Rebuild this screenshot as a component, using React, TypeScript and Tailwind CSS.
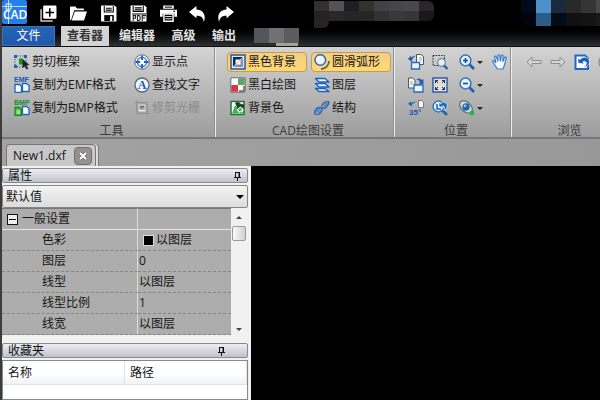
import { useState } from "react";
import type { ReactNode } from "react";

function Svg({ children, size = 16, label }: { children: ReactNode; size?: number; label?: string }) {
  return (
    <svg width={size} height={size} viewBox="0 0 16 16" fill="none" className="shrink-0" role={label ? "img" : undefined} aria-label={label} aria-hidden={label ? undefined : true}>
      {children}
    </svg>
  );
}

/* Title bar icons */
const quick: { name: string; art: ReactNode; width: string }[] = [
  {
    name: "新建",
    width: "w-[30px]",
    art: (
      <>
        <path d="M1 4v11h11" stroke="#ccc" strokeWidth="1.4" />
        <rect x="3" y="0.5" width="12.5" height="12.5" rx="1.2" fill="#fff" />
        <path d="M9.2 3v8M5.2 7h8" stroke="#000" strokeWidth="1.5" />
      </>
    ),
  },
  {
    name: "打开",
    width: "w-[30px]",
    art: (
      <>
        <path d="M0 14V2.5Q0 1.5 1 1.5h4l1.6 1.7H13V5H4L1 14z" fill="#fff" />
        <path d="M4.5 6H16l-2.8 8.7H1.5z" fill="#fff" />
      </>
    ),
  },
  {
    name: "保存",
    width: "w-[30px]",
    art: (
      <>
        <path d="M1 0.5h12.6L15.5 2v13.5H1z" fill="#fff" />
        <path d="M4 1v5.5h8.5V1M5.5 3h5.5M5.5 4.8h5.5" stroke="#000" />
        <path d="M4 9.5h9V15H4z" fill="#000" />
        <path d="M9.5 10.5h2V15h-2z" fill="#fff" />
      </>
    ),
  },
  {
    name: "保存为 PDF",
    width: "w-[30px]",
    art: (
      <>
        <path d="M0.5 0.5H14L15.5 2v13.5h-15z" fill="#fff" />
        <path d="M3 1v5h9.5V1M4.5 2.7H11M4.5 4.5H11M2 8.5h13" stroke="#000" />
        <path d="M3 15v-5h2.2v2.5H3M7 10v4.5h1.7l.8-1v-2.5l-.8-1zM11.5 15v-5H15M11.5 12.3h2.8" stroke="#222" />
      </>
    ),
  },
  {
    name: "打印",
    width: "w-[30px]",
    art: (
      <>
        <path d="M3 0.5h10v3H3zM0 4.5h16V11h-2.5V8h-11v3H0z" fill="#fff" />
        <path d="M4.5 2h7" stroke="#000" />
        <path d="M3.7 8.5h8.6v6.7H3.7z" stroke="#fff" strokeWidth="1.4" />
        <path d="M5 10.8h6M5 13h6" stroke="#ddd" />
        <path d="M12.5 6h1.5" stroke="#000" />
      </>
    ),
  },
  {
    name: "撤销",
    width: "w-[28px]",
    art: <path d="M0 6.5 7 1v3.2c6 .2 9.4 4.8 7 11.8-.6-4.2-2.7-6.1-7-5.9V12.5z" fill="#fff" />,
  },
  {
    name: "重做",
    width: "w-[28px]",
    art: <path d="M16 6.5 9 1v3.2C3 4.4-.4 9 2 16c.6-4.2 2.7-6.1 7-5.9V12.5z" fill="#fff" />,
  },
];

/* Ribbon icons */
const clipArt = (
  <>
    <rect x="1" y="2" width="11" height="11" stroke="#123b8c" strokeDasharray="1 1.5" />
    <path d="M0 1h3v3H0zM10 1h3v3h-3zM0 11h3v3H0z" fill="#1c62c4" />
    <path d="M5 4.5h4v6H5z" fill="#15951b" />
    <path d="m8.5 5 7 6-3 .4 1.8 3-1.7 1-1.8-3.2-2.3 2z" fill="#222" />
  </>
);
const dialArt = (
  <>
    <circle cx="8" cy="8" r="7.2" fill="#f4f8fd" stroke="#666e7b" />
    <circle cx="8" cy="8" r="4.6" stroke="#2b6cc8" strokeWidth="1.3" />
    <path d="M8 1.5V6M8 10v4.5M1.5 8H6M10 8h4.5" stroke="#1b5fbf" strokeWidth="1.8" />
  </>
);
const pages = (green: boolean) => (
  <>
    <path d="M8.5 6.5h4l2.5 2v6H8.5z" fill="#fff" stroke="#1c62c4" strokeWidth="1.3" />
    <path d="M1 7.5h4.5l2 2v6H1z" fill={green ? "#55bd4a" : "#fff"} stroke={green ? "#168b20" : "#1c62c4"} strokeWidth="1.3" />
    {green && <path d="M2.5 11h3.5M2.5 13h3.5" stroke="#e6f7e2" />}
  </>
);
const emfArt = (
  <>
    <text x="0" y="5" fontFamily="Liberation Sans, sans-serif" fontWeight="700" fontSize="7" fill="#1658b0">EMF</text>
    {pages(false)}
  </>
);
const bmpArt = (
  <>
    <text x="0" y="5" fontFamily="Liberation Sans, sans-serif" fontWeight="700" fontSize="7" fill="#18902a">BMP</text>
    {pages(true)}
  </>
);
const findArt = (
  <>
    <circle cx="8" cy="8" r="7" fill="#f0f6fd" stroke="#5b6370" strokeWidth="1.3" />
    <text x="8" y="12" textAnchor="middle" fontFamily="Liberation Serif, serif" fontWeight="700" fontSize="12" fill="#1759b5">A</text>
  </>
);
const rasterArt = (
  <>
    <path d="M2.5 0v13.5H16M0 2.5h13.5V16" stroke="#929292" />
    <path d="M4 4h8v8H4z" fill="#f0f0f0" stroke="#999" />
    <path d="M5.5 5.5h5v4h-5z" fill="#777" />
    <path d="m5.5 9.5 2-2 1 1 2-2v3z" fill="#aaa" />
  </>
);
const blackArt = (
  <>
    <rect x="1" y="1" width="14" height="14" fill="#dbe8f8" stroke="#24599d" strokeWidth="1.5" />
    <path d="M3 3h10L3 13z" fill="#16253e" />
    <path d="M13 3v10H3z" fill="#8792a3" />
    <path d="M5.5 5.5h5v5h-5z" fill="#fff" />
    <path d="M3 13 13 3" stroke="#bcc8d9" />
  </>
);
const bwArt = (
  <>
    <path d="M1 1h14v14H1z" fill="#fff" stroke="#555" />
    <path d="M1.5 1.5H8V8H1.5z" fill="#fff" />
    <path d="M8 1.5h6.5V8H8z" fill="#59a666" />
    <path d="M1.5 8H8v6.5H1.5z" fill="#dd3342" />
    <path d="M8 8h6.5v6.5H8z" fill="#f6f6f6" />
    <path d="M9 14h5V9" stroke="#222" />
  </>
);
const colorArt = (
  <>
    <rect x="1" y="1.5" width="13" height="13" fill="#fff" stroke="#217635" strokeWidth="1.5" />
    <path d="m2 13.5 3-8 9 8z" fill="#35b64a" />
    <path d="M5 3.5Q8 .5 11 4l3.5.5-1 4.5-3-2-3 2-1-3z" fill="#273c2c" />
    <path d="m6.5 10 4-3.5 3 3-4 3.5z" fill="#fff" />
    <path d="m8 9.8 2.5-2 1.8 1.8-2.5 2z" fill="#35b64a" />
  </>
);
const arcArt = (
  <>
    <path d="M15 7a8 8 0 0 1-8 8" stroke="#65635d" strokeWidth="1.8" />
    <circle cx="6.3" cy="6" r="5.3" fill="#edf4fc" stroke="#2d68b8" strokeWidth="1.5" />
    <path d="M3 6q0-3 3-3" stroke="#fff" strokeWidth="2" />
  </>
);
const layersArt = (
  <g fill="#eef5fd" stroke="#1b60bd" strokeWidth="1.4" strokeLinejoin="round">
    <path d="M1.5 11.5H11l4 3H5z" />
    <path d="M1.5 6.5H11l4 3.5H5z" />
    <path d="M1.5 1.5H11l4 3.5H5z" />
  </g>
);
const helixArt = (
  <>
    <path d="M1 14.5C0 9 4 7 7.5 8S14 7 15 1.5" stroke="#2469c5" strokeWidth="1.7" />
    <path d="M1.5 14.5C7 15 8.5 11 8 7.5S9 1.5 15 1.5" stroke="#526d91" strokeWidth="1.5" />
    <path d="m2 10 4 3M3.5 8.5l4 3M9 4l4 3M10.5 2.5l3 2.5" stroke="#3a7bd0" strokeWidth="1.2" />
  </>
);
const rotateLeft = (
  <>
    <path d="M8.5 .5h4l3 2v8h-7z" fill="#f7f7f7" stroke="#555" />
    <path d="M11 4h3M11 6h3" stroke="#aaa" />
    <path d="M3.5 8.5h8v6.5h-8z" fill="#eaf3fd" stroke="#2369bd" strokeWidth="1.3" />
    <path d="m0 5 3-3.5v2q3-2 5-2-3 1.5-4 4.5v2z" fill="#245fac" />
  </>
);
const rotateRight = (
  <>
    <path d="M.5 1h4l2.5 2v8H.5z" fill="#f7f7f7" stroke="#555" />
    <path d="M2 5h3M2 7h3" stroke="#aaa" />
    <path d="M6 8h9v7H6z" fill="#eaf3fd" stroke="#2369bd" strokeWidth="1.3" />
    <path d="M8 2q4-1.5 6 1l1.5-1v5h-4.7L12 5q-1-2-4-3" fill="#245fac" />
  </>
);
const rotate35 = (
  <>
    <path d="M10.5 .5H14l1.5 2v5h-5z" fill="#f7f7f7" stroke="#777" />
    <path d="m0 4 3-3v2q4-2 6-1.5-3 1-5 3v2z" fill="#2167b9" />
    <text x="1" y="15" fontFamily="Liberation Sans, sans-serif" fontWeight="700" fontSize="8" fill="#1459b0">35°</text>
  </>
);
const glass = (mark: ReactNode) => (
  <>
    <path d="m10 10 5 5" stroke="#2464ae" strokeWidth="2.8" />
    <circle cx="6.5" cy="6.5" r="5.4" fill="#e5f2fd" stroke="#3473bb" strokeWidth="1.5" />
    {mark}
  </>
);
const marqueeArt = (
  <>
    <path d="M1 1.5h11.5V7M1 1.5v10h5" stroke="#222" strokeDasharray="1.5 1.2" />
    <circle cx="9.5" cy="8.5" r="3.8" fill="#e4f0fc" stroke="#6e89ab" strokeWidth="1.3" />
    <path d="m12 11.5 3.5 3.5" stroke="#2364b1" strokeWidth="2.4" />
  </>
);
const extentsArt = (
  <>
    <rect x="1" y="1" width="14" height="14" fill="#dedede" stroke="#2459a6" strokeWidth="1.4" />
    <path d="M3.5 6V3.5H6M10 3.5h2.5V6M12.5 10v2.5H10M6 12.5H3.5V10M3.5 3.5l2.5 2.5M12.5 3.5 10 6M12.5 12.5 10 10M3.5 12.5 6 10" stroke="#252e38" />
  </>
);
const previousArt = (
  <>
    {glass(null)}
    <path d="M5 4v5h4" stroke="#1862c1" strokeWidth="1.5" />
    <path d="M7 7V2.5l1.7 1.3Q12 0 15 4.5c.8 3-.5 4.8-3 6 1-3 .5-5-1.4-4.5L12 7z" fill="#2166bb" stroke="#e2effc" strokeWidth=".7" />
  </>
);
const orbitArt = (
  <>
    <ellipse cx="7" cy="7" rx="7.4" ry="4.8" transform="rotate(42 7 7)" fill="#d3dddf" stroke="#66727c" strokeWidth="1.3" />
    <circle cx="7" cy="7" r="3.7" fill="#1f66ad" />
    <circle cx="6" cy="5.8" r="1.4" fill="#8ecdf5" />
    <circle cx="13" cy="13" r="2.4" fill="#25b53b" />
  </>
);
const handArt = (
  <path
    d="M5 14.8C4 12 1.5 9.4.7 7.8.2 6.7 1.5 6.2 2.2 7L4 9 2.6 3.3c-.3-1.3 1.3-1.6 1.7-.4L6 7.4 5.8 1.8c0-1.3 1.7-1.4 1.9 0l.7 5.4.9-5.4c.3-1.3 1.9-1 1.8.3l-.4 5.7 1.9-4.2c.5-1.2 2-.5 1.6.7-1 3-1.4 6-2.2 8L11 15z"
    fill="#f1f7fe"
    stroke="#3476c4"
    strokeWidth="1.1"
  />
);
const arrowArt = <path d="M1 8 6 3v3.5h9v3H6V13z" fill="#d5d5d5" stroke="#8e8e8e" />;
const refreshArt = (
  <>
    <path d="M1.5 1.5h9.5l3 3v10.5H1.5z" fill="#fff" stroke="#1d69c9" strokeWidth="2" />
    <path d="M4 9V4l2 1.6Q10 1 14.7 5c2 4-.3 7.5-5.2 9 3-2.8 4-5.5 1.4-6.6q-1.2-.3-2 .5L10 10z" fill="#155fc0" stroke="#fff" strokeWidth=".6" />
  </>
);

function Tool({ art, text, active, disabled, width }: { art: ReactNode; text: string; active?: boolean; disabled?: boolean; width: string }) {
  return (
    <button
      type="button"
      disabled={disabled}
      aria-pressed={active}
      className={`flex h-5 items-center gap-0.5 whitespace-nowrap rounded-sm border pl-0.5 text-xs leading-4 ${width} ${
        active ? "border-[#c99a47] bg-linear-to-b from-[#f4ce84] to-[#ffd970]" : "border-transparent"
      } ${disabled ? "text-[#8b8b8b]" : "text-[#171717]"}`}
    >
      <Svg>{art}</Svg>
      {text}
    </button>
  );
}

function IconTool({ art, name, menu, flip }: { art: ReactNode; name: string; menu?: boolean; flip?: boolean }) {
  return (
    <button type="button" aria-label={name} className="flex h-5 items-center gap-0.5">
      <span className={flip ? "-scale-x-100" : ""}>
        <Svg>{art}</Svg>
      </span>
      {menu && <span className="border-x-[3px] border-t-[3px] border-x-transparent border-t-[#252525]" />}
    </button>
  );
}

function Group({ title, width, children }: { title: string; width: string; children: ReactNode }) {
  return (
    <section aria-label={title} className={`flex shrink-0 flex-col justify-between border-r border-[#eee] pt-[5px] shadow-[inset_-1px_0_0_#8e8e8e] ${width}`}>
      {children}
      <h2 className="pl-1.5 text-center text-xs leading-3 text-[#3b3b3b]">{title}</h2>
    </section>
  );
}

function Pin() {
  return (
    <svg width="9" height="10" viewBox="0 0 9 10" aria-hidden="true">
      <path d="M2.5 1v5M2.5 1.5h4M1 6.5h7M4.5 6v4" stroke="#111" fill="none" />
      <path d="M5.5 1H7v5H5.5z" fill="#111" />
    </svg>
  );
}

function PanelTitle({ text, pad }: { text: string; pad: string }) {
  return (
    <div className={`flex h-[15px] items-center justify-between rounded-xs border border-[#858991] bg-linear-to-b from-[#eceef1] to-[#bfc3c9] pl-[5px] text-xs leading-3 text-[#111] ${pad}`}>
      <h2>{text}</h2>
      <button type="button" aria-label="固定">
        <Pin />
      </button>
    </div>
  );
}

/* Pixelated strips in the title bar */
function Mosaic({ rows, cell, className }: { rows: string[][]; cell: string; className: string }) {
  return (
    <div aria-hidden="true" className={`absolute overflow-hidden ${className}`}>
      {rows.map((row, r) => (
        <div key={r} className="flex">
          {row.map((color, c) => (
            <span key={c} className={`w-[15px] shrink-0 ${cell}`} style={{ backgroundColor: color }} />
          ))}
        </div>
      ))}
    </div>
  );
}

const properties = [
  ["色彩", "以图层"],
  ["图层", "0"],
  ["线型", "以图层"],
  ["线型比例", "1"],
  ["线宽", "以图层"],
];

export default function App() {
  const [tab, setTab] = useState("查看器");
  const tabs = [
    { name: "查看器", width: "w-12" },
    { name: "编辑器", width: "w-14" },
    { name: "高级", width: "w-[37px]" },
    { name: "输出", width: "w-11" },
  ];
  return (
    <div className="flex h-screen flex-col overflow-hidden border-l-2 border-[#3c3c3c] bg-[#989898] font-['Open_Sans','Noto_Sans_CJK_SC',sans-serif] text-xs text-[#151515]">
      <header className="relative shrink-0 border-b border-[#111] bg-linear-to-b from-black from-55% to-[#303133]">
        <div className="flex h-[26px] items-start">
          <svg width="25" height="24" viewBox="0 0 25 24" role="img" aria-label="CAD" className="mr-1.5 shrink-0">
            <rect width="25" height="24" rx="2" fill="#257eea" />
            <path d="M0 6.5h25M6.5 0v24" stroke="#b9dcff" />
            <rect x="4" y="4" width="5" height="5" stroke="#e3f1ff" fill="none" />
            <text x="1" y="19" fontFamily="Open Sans, sans-serif" fontWeight="600" fontSize="12" fill="#fff">CAD</text>
          </svg>
          {quick.map((q) => (
            <button key={q.name} type="button" aria-label={q.name} className={`flex h-[26px] shrink-0 items-center justify-center ${q.width}`}>
              <Svg size={17}>{q.art}</Svg>
            </button>
          ))}
        </div>
        <nav className="flex h-5 items-stretch font-bold">
          <button type="button" className="mr-1.5 w-[53px] border border-[#3b73be] bg-linear-to-b from-[#2564b5] to-[#2259aa] font-normal leading-4 text-white">文件</button>
          {tabs.map((t) => (
            <button
              key={t.name}
              type="button"
              onClick={() => setTab(t.name)}
              className={`whitespace-nowrap leading-4 ${t.width} ${tab === t.name ? "bg-[#d3d3d3] text-[#343434]" : "text-[#e5e5e5]"}`}
            >
              {t.name}
            </button>
          ))}
        </nav>
        <Mosaic
          className="left-[312px] top-px rounded-r-md"
          cell="h-2.5"
          rows={[
            ["#343032", "#555253", "#1d1f24", "#34322d", "#404246", "#464646", "#49494b", "#29272a"],
            ["#242223", "#292727", "#242526", "#272624", "#303236", "#383838", "#343638", "#1a1918"],
          ]}
        />
        <Mosaic className="left-[312px] top-5 rounded-br-md" cell="h-2" rows={[["#262422"]]} />
        <Mosaic className="left-[252px] top-7" cell="h-[15px]" rows={[["#555659", "#707174", "#5b5c5f"]]} />
        <div aria-hidden="true" className="absolute left-[274px] top-[43px] h-[3px] w-[22px] bg-[#aaa08e]" />
        <Mosaic
          className="left-[519px] top-0 rounded-bl-lg"
          cell="h-[13px]"
          rows={[
            ["#020919", "#4d91c9", "#192a3b", "#292929", "#353535", "#484848"],
            ["#01040a", "#2d5c87", "#020b17", "#111", "#141414", "#181818"],
          ]}
        />
      </header>

      <main className="flex min-h-0 flex-1 flex-col">
        <div className="flex h-[92px] shrink-0 overflow-hidden border-b-2 border-[#777] bg-linear-to-b from-[#d3d3d3] to-[#9d9d9d]">
          <Group title="工具" width="w-[214px]">
            <div className="grid grid-cols-[120px_90px] gap-y-[3px] pl-[9px]">
              <Tool art={clipArt} text="剪切框架" width="w-[116px]" />
              <Tool art={dialArt} text="显示点" width="w-20" />
              <Tool art={emfArt} text="复制为EMF格式" width="w-[116px]" />
              <Tool art={findArt} text="查找文字" width="w-20" />
              <Tool art={bmpArt} text="复制为BMP格式" width="w-[116px]" />
              <Tool art={rasterArt} text="修剪光栅" width="w-20" disabled />
            </div>
          </Group>
          <Group title="CAD绘图设置" width="w-[179px]">
            <div className="grid grid-cols-[80px_80px] gap-x-1 gap-y-[3px] pl-[11px]">
              <Tool art={blackArt} text="黑色背景" width="w-20" active />
              <Tool art={arcArt} text="圆滑弧形" width="w-20" active />
              <Tool art={bwArt} text="黑白绘图" width="w-20" />
              <Tool art={layersArt} text="图层" width="w-20" />
              <Tool art={colorArt} text="背景色" width="w-20" />
              <Tool art={helixArt} text="结构" width="w-20" />
            </div>
          </Group>
          <Group title="位置" width="w-[117px]">
            <div className="grid grid-cols-[24px_27px_33px_16px] gap-y-[3px] pl-[13px]">
              <IconTool art={rotateLeft} name="向左旋转" />
              <IconTool art={marqueeArt} name="窗口缩放" />
              <IconTool art={glass(<path d="M4 6.5h5M6.5 4v5" stroke="#164b9c" strokeWidth="1.6" />)} name="放大" menu />
              <IconTool art={handArt} name="平移" />
              <IconTool art={rotateRight} name="向右旋转" />
              <IconTool art={extentsArt} name="适合窗口" />
              <IconTool art={glass(<path d="M4 6.5h5" stroke="#164b9c" strokeWidth="1.6" />)} name="缩小" menu />
              <span />
              <IconTool art={rotate35} name="旋转 35°" />
              <IconTool art={previousArt} name="上一视图" />
              <IconTool art={orbitArt} name="三维视图" menu />
            </div>
          </Group>
          <Group title="浏览" width="w-[110px]">
            <div className="flex gap-2 pl-[14px]">
              <IconTool art={arrowArt} name="后退" />
              <IconTool art={arrowArt} name="前进" flip />
              <IconTool art={refreshArt} name="刷新" />
              <IconTool art={<circle cx="8" cy="8" r="7" stroke="#888" strokeWidth="1.3" />} name="更多" />
            </div>
          </Group>
        </div>

        <div className="flex h-[27px] shrink-0 items-end bg-linear-to-r from-[#a3a3a3] to-[#989898] pl-1">
          <div className="flex h-[22px] items-center gap-2 rounded-t-sm border border-b-0 border-[#777] bg-[#c8c8c8] pl-1.5 pr-[3px] shadow-[2px_0_0_#ddd,3px_0_0_#777]">
            <span>New1.dxf</span>
            <button type="button" aria-label="关闭 New1.dxf" className="flex size-[18px] items-center justify-center rounded-sm border border-[#707070] bg-[#929292]">
              <svg width="10" height="10" viewBox="0 0 10 10" aria-hidden="true">
                <path d="m2 2 6 6M8 2 2 8" stroke="#756d4d" strokeWidth="3.6" />
                <path d="m2 2 6 6M8 2 2 8" stroke="#fff" strokeWidth="2" />
              </svg>
            </button>
          </div>
        </div>

        <div className="flex min-h-0 flex-1">
          <aside className="flex w-[249px] shrink-0 flex-col bg-[#f1f1f1] pr-[3px] pt-0.5">
            <PanelTitle text="属性" pad="pr-[5px]" />
            <div className="relative mt-0.5">
              <select aria-label="属性默认值" className="block h-[23px] w-full appearance-none rounded-xs border border-[#858585] bg-linear-to-b from-[#f4f4f4] to-[#dcdcdc] pl-[3px] text-xs">
                <option>默认值</option>
              </select>
              <span aria-hidden="true" className="pointer-events-none absolute right-1 top-2.5 border-x-4 border-t-4 border-x-transparent border-t-black" />
            </div>
            <div className="flex pr-px">
              <table className="flex-1 table-fixed border-separate border-spacing-0 bg-[#adadad] leading-4">
                <tbody>
                  <tr className="h-[22px]">
                    <th className="w-[136px] border-b border-r border-t border-b-[#e6e6e6] border-r-[#ddd] border-t-[#777] p-0 text-left font-normal">
                      <button type="button" className="flex items-center gap-1 pl-[5px]">
                        <span className="flex size-[11px] items-center justify-center border border-[#111] bg-[#eee]">
                          <span className="h-px w-[7px] bg-black" />
                        </span>
                        一般设置
                      </button>
                    </th>
                    <td className="border-b border-t border-b-[#e6e6e6] border-t-[#777] p-0" />
                  </tr>
                  {properties.map(([name, value]) => (
                    <tr key={name} className="h-[21px]">
                      <th scope="row" className="border-b border-r border-dashed border-b-[#858585] border-r-[#ddd] p-0 pl-10 text-left font-normal [border-right-style:solid]">{name}</th>
                      <td className="border-b border-dashed border-[#858585] p-0 pl-px">
                        <span className="flex items-center gap-0.5">
                          {name === "色彩" && <span className="ml-1 size-[11px] border border-[#ddd] bg-black" />}
                          {value}
                        </span>
                      </td>
                    </tr>
                  ))}
                </tbody>
              </table>
              <div className="flex w-4 shrink-0 flex-col items-center pb-1 pt-2">
                <span className="border-x-[3px] border-b-[3px] border-x-transparent border-b-[#444]" />
                <span className="mt-[7px] h-[15px] w-3.5 rounded-xs border border-[#999] bg-linear-to-r from-[#fafafa] to-[#d1d1d1]" />
                <span className="mt-auto border-x-[3px] border-t-[3px] border-x-transparent border-t-[#444]" />
              </div>
            </div>
            <div className="mt-2 flex min-h-0 flex-1 flex-col">
              <PanelTitle text="收藏夹" pad="pr-[21px]" />
              <div className="mt-0.5 flex-1 border border-[#858991] bg-white">
                <table className="w-full table-fixed border-separate border-spacing-0">
                  <thead>
                    <tr className="h-6 bg-linear-to-b from-white from-50% to-[#eff1f4]">
                      <th className="w-[122px] border-b border-r border-[#dfe2e7] p-0 pl-[5px] text-left font-normal">名称</th>
                      <th className="border-b border-r border-[#dfe2e7] p-0 pl-[5px] text-left font-normal">路径</th>
                    </tr>
                  </thead>
                </table>
              </div>
            </div>
          </aside>
          <section aria-label="绘图区" className="flex-1 bg-black" />
        </div>
      </main>
    </div>
  );
}
